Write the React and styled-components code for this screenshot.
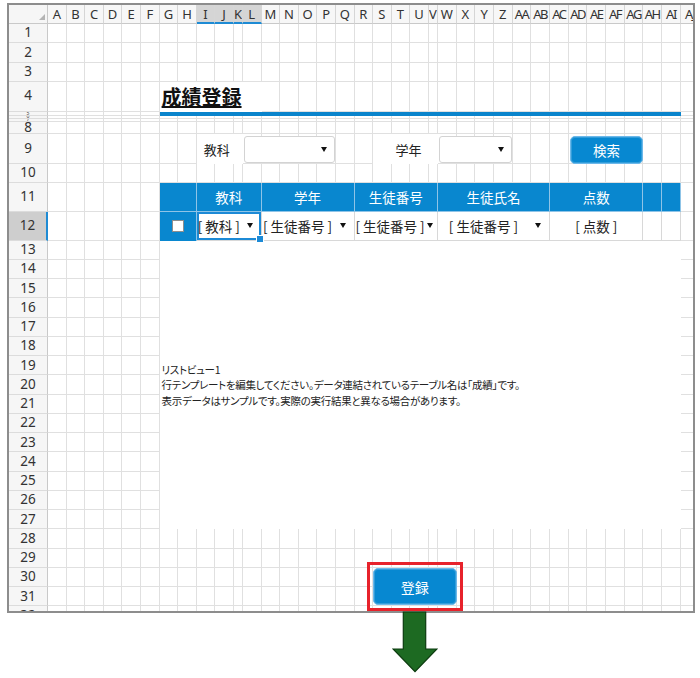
import React from 'react';
import styled, { createGlobalStyle } from 'styled-components';

const GlobalStyle = createGlobalStyle`
  html, body { margin: 0; padding: 0; background: #fff; }
  body { font-family: "Noto Sans", "Noto Sans CJK JP", sans-serif; color: #222; }
  * { box-sizing: border-box; }
`;

const COLS = [...'ABCDEFGHIJKLMNOPQRSTUVWXYZ', 'AA', 'AB', 'AC', 'AD', 'AE', 'AF', 'AG', 'AH', 'AI', 'AJ'];
const ROWS = 32;
const SELECTED_COLS = ['I', 'J', 'K', 'L'];
const SELECTED_ROW = 12;
const SQUASHED_ROWS = [5, 6, 7];

const colLine = (name) => COLS.indexOf(name) + 2;
const rowLine = (n) => n + 1;
const area = (r1, c1, r2 = r1, c2 = c1) =>
  `${rowLine(r1)} / ${colLine(c1)} / ${rowLine(r2) + 1} / ${colLine(c2) + 1}`;

const COL_TRACKS = '39px repeat(10, 18.6px) 9px repeat(10, 18.6px) 9px repeat(13, 18.7px) 18.7px';
const ROW_TRACKS =
  '19px repeat(3, 19.3px) 29.7px 4px 3px 3.4px 12.3px 30px 18.4px 29px 29px repeat(20, 19.25px)';

const JP = '"Noto Sans CJK JP", "Noto Sans", sans-serif';

const Page = styled.div`
  padding: 3px 0 0 7px;
`;

const Frame = styled.div`
  width: 688px;
  height: 610px;
  border: 2px solid #8d8d8d;
  overflow: hidden;
  display: grid;
  background: #fff;
`;

const Layer = styled.div`
  grid-area: 1 / 1;
  display: grid;
  grid-template-columns: ${COL_TRACKS};
  grid-template-rows: ${ROW_TRACKS};
`;

const Cell = styled.div`
  border-right: 1px solid #e0e0e0;
  border-bottom: 1px solid #e0e0e0;
`;

const Corner = styled.div`
  background: #f6f6f6;
  border-right: 1px solid #c9c9c9;
  border-bottom: 1px solid #c9c9c9;
  display: flex;
  align-items: flex-end;
  justify-content: flex-end;
  padding: 0 2px 3px 0;
`;

const ColHead = styled.div`
  display: flex;
  align-items: center;
  justify-content: center;
  overflow: hidden;
  white-space: nowrap;
  font-size: 13px;
  letter-spacing: ${(p) => (p.$wide ? '-1.5px' : '0')};
  color: #333;
  background: ${(p) => (p.$selected ? '#d5d5d5' : '#f7f7f7')};
  border-right: 1px solid #d6d6d6;
  border-bottom: ${(p) => (p.$selected ? '2px solid #1e8bd4' : '1px solid #c9c9c9')};
`;

const RowHead = styled.div`
  display: flex;
  align-items: center;
  justify-content: center;
  overflow: hidden;
  font-size: ${(p) => (p.$squashed ? '5px' : '13.5px')};
  line-height: 1;
  color: #333;
  background: ${(p) => (p.$selected ? '#cecece' : '#f6f6f6')};
  border-right: ${(p) => (p.$selected ? '2px solid #1e8bd4' : '1px solid #c9c9c9')};
  border-bottom: 1px solid #dcdcdc;
`;

const Title = styled.div`
  grid-area: ${(p) => p.$area};
  background: #fff;
  display: flex;
  align-items: flex-end;
  padding: 0 0 3px 2px;
  font-family: ${JP};
  font-weight: 700;
  font-size: 20px;
  line-height: 24px;
  color: #111;
  text-decoration: underline;
  text-decoration-thickness: 2px;
  text-underline-offset: 1px;
`;

const Bar = styled.div`
  grid-area: ${(p) => p.$area};
  background: #0984cc;
`;

const Label = styled.div`
  grid-area: ${(p) => p.$area};
  background: #fff;
  display: flex;
  align-items: center;
  justify-content: center;
  padding: ${(p) => (p.$shift === 'right' ? '0 0 0 6px' : '0 6px 0 0')};
  font-family: ${JP};
  font-size: 13px;
  color: #222;
`;

const Select = styled.div`
  grid-area: ${(p) => p.$area};
  margin: 2px 1px 1px 1px;
  background: #fff;
  border: 1px solid #d3d3d3;
  border-radius: 3px;
  display: flex;
  align-items: center;
  justify-content: flex-end;
  padding-right: 7px;
`;

const Caret = styled.span`
  width: 0;
  height: 0;
  border-left: 3px solid transparent;
  border-right: 3px solid transparent;
  border-top: 5px solid #111;
`;

const Button = styled.div`
  grid-area: ${(p) => p.$area || 'auto'};
  margin: ${(p) => p.$margin || '0'};
  flex: 1;
  background: #0788d1;
  border: 1px solid #6cb8ea;
  border-radius: 5px;
  box-shadow: inset 0 0 0 1px rgba(255, 255, 255, 0.18);
  display: flex;
  align-items: center;
  justify-content: center;
  font-family: ${JP};
  font-size: ${(p) => p.$size};
  color: #fff;
`;

const Marker = styled.div`
  grid-area: ${(p) => p.$area};
  margin: -6px -6px -5px -6px;
  border: 3px solid #e7222b;
  padding: 3px;
  display: flex;
`;

const LvHead = styled.div`
  grid-area: ${(p) => p.$area};
  background: #0987cf;
  border-right: 1px solid #8fc4e7;
  border-bottom: 1px solid #8fc4e7;
  display: flex;
  align-items: center;
  justify-content: center;
  font-family: ${JP};
  font-size: 13.5px;
  color: #fff;
`;

const LvCheckCell = styled.div`
  grid-area: ${(p) => p.$area};
  background: #0987cf;
  border-right: 1px solid #8fc4e7;
  display: flex;
  align-items: center;
  justify-content: center;
`;

const CheckBox = styled.span`
  width: 12px;
  height: 12px;
  background: #fff;
  border: 1px solid #8e8e8e;
`;

const LvCell = styled.div`
  grid-area: ${(p) => p.$area};
  position: relative;
  z-index: ${(p) => (p.$active ? 1 : 0)};
  background: #fff;
  border-right: 1px solid #d8d8d8;
  border-bottom: 1px solid #d8d8d8;
  box-shadow: ${(p) => (p.$active ? 'inset 0 0 0 2px #1c8ad6' : 'none')};
  display: flex;
  align-items: center;
  font-family: ${JP};
  font-size: 13.5px;
  color: #222;

  &::after {
    content: '';
    display: ${(p) => (p.$active ? 'block' : 'none')};
    position: absolute;
    right: -3px;
    bottom: -3px;
    width: 6px;
    height: 6px;
    background: #1c8ad6;
    border: 1px solid #fff;
  }
`;

const CellText = styled.span`
  flex: 1;
  text-align: center;
  white-space: nowrap;
`;

const Bracket = styled.span`
  margin: ${(p) => (p.$close ? '0 1px 0 3px' : '0 3px 0 1px')};
`;

const CaretBox = styled.span`
  width: 20px;
  display: flex;
  justify-content: center;
  padding-right: 2px;
`;

const LvBody = styled.div`
  grid-area: ${(p) => p.$area};
  background: #fff;
  display: flex;
  align-items: center;
  padding-left: 2px;
`;

const Note = styled.div`
  font-family: ${JP};
  font-size: 10.5px;
  line-height: 15.5px;
  letter-spacing: -0.3px;
  font-feature-settings: "palt";
  color: #222;
  white-space: nowrap;
`;

const ArrowWrap = styled.div`
  display: flex;
  padding-left: 385px;
  margin-top: -2px;
`;

const LV_HEAD = [
  { c1: 'G', c2: 'H', label: '' },
  { c1: 'I', c2: 'L', label: '教科' },
  { c1: 'M', c2: 'Q', label: '学年' },
  { c1: 'R', c2: 'V', label: '生徒番号' },
  { c1: 'W', c2: 'AB', label: '生徒氏名' },
  { c1: 'AC', c2: 'AG', label: '点数' },
  { c1: 'AH', c2: 'AH', label: '' },
  { c1: 'AI', c2: 'AI', label: '' },
];

const LV_ROW = [
  { c1: 'I', c2: 'L', field: '教科', select: true, active: true },
  { c1: 'M', c2: 'Q', field: '生徒番号', select: true },
  { c1: 'R', c2: 'V', field: '生徒番号', select: true },
  { c1: 'W', c2: 'AB', field: '生徒番号', select: true },
  { c1: 'AC', c2: 'AG', field: '点数' },
  { c1: 'AH', c2: 'AH', field: '' },
  { c1: 'AI', c2: 'AI', field: '' },
];

function BackgroundGrid() {
  const cells = [];
  for (let r = 0; r <= ROWS; r++) {
    for (let c = 0; c <= COLS.length; c++) {
      const key = `${r}-${c}`;
      if (r === 0 && c === 0) {
        cells.push(
          <Corner key={key}>
            <svg width="6" height="6" viewBox="0 0 6 6">
              <polygon points="6,0 6,6 0,6" fill="#b4b4b4" />
            </svg>
          </Corner>
        );
      } else if (r === 0) {
        const name = COLS[c - 1];
        cells.push(
          <ColHead key={key} $selected={SELECTED_COLS.includes(name)} $wide={name.length > 1}>
            {name}
          </ColHead>
        );
      } else if (c === 0) {
        cells.push(
          <RowHead key={key} $selected={r === SELECTED_ROW} $squashed={SQUASHED_ROWS.includes(r)}>
            {r}
          </RowHead>
        );
      } else {
        cells.push(<Cell key={key} />);
      }
    }
  }
  return <Layer>{cells}</Layer>;
}

function ListView() {
  return (
    <>
      {LV_HEAD.map((h) => (
        <LvHead key={h.c1} $area={area(11, h.c1, 11, h.c2)}>
          {h.label}
        </LvHead>
      ))}
      <LvCheckCell $area={area(12, 'G', 12, 'H')}>
        <CheckBox />
      </LvCheckCell>
      {LV_ROW.map((cell) => (
        <LvCell key={cell.c1} $area={area(12, cell.c1, 12, cell.c2)} $active={cell.active}>
          {cell.field && (
            <CellText>
              <Bracket>[</Bracket>
              {cell.field}
              <Bracket $close>]</Bracket>
            </CellText>
          )}
          {cell.select && (
            <CaretBox>
              <Caret />
            </CaretBox>
          )}
        </LvCell>
      ))}
      <LvBody $area={area(13, 'G', 27, 'AI')}>
        <Note>
          リストビュー1
          <br />
          行テンプレートを編集してください。データ連結されているテーブル名は「成績」です。
          <br />
          表示データはサンプルです。実際の実行結果と異なる場合があります。
        </Note>
      </LvBody>
    </>
  );
}

function ContentLayer() {
  return (
    <Layer>
      <Title $area={area(4, 'G', 4, 'L')}>成績登録</Title>
      <Bar $area={area(5, 'G', 5, 'AI')} />
      <Label $area={area(9, 'I', 9, 'K')}>教科</Label>
      <Select $area={area(9, 'L', 9, 'P')}>
        <Caret />
      </Select>
      <Label $area={area(9, 'S', 9, 'V')} $shift="right">
        学年
      </Label>
      <Select $area={area(9, 'W', 9, 'Z')}>
        <Caret />
      </Select>
      <Button $area={area(9, 'AD', 9, 'AG')} $margin="2px 0 0 1px" $size="13.5px">
        検索
      </Button>
      <ListView />
      <Marker $area={area(30, 'S', 31, 'W')}>
        <Button $size="14px">登録</Button>
      </Marker>
    </Layer>
  );
}

function DownArrow() {
  return (
    <svg width="46" height="62" viewBox="0 0 46 62">
      <polygon
        points="11.3,1 33.7,1 33.7,38 45,38 23,60.7 1,38 11.3,38"
        fill="#1d6a22"
        stroke="#0b3a0e"
        strokeWidth="1.2"
        strokeLinejoin="miter"
      />
    </svg>
  );
}

export default function App() {
  return (
    <>
      <GlobalStyle />
      <Page>
        <Frame>
          <BackgroundGrid />
          <ContentLayer />
        </Frame>
        <ArrowWrap>
          <DownArrow />
        </ArrowWrap>
      </Page>
    </>
  );
}
